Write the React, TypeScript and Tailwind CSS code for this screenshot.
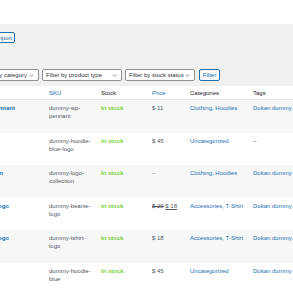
const rows = [
  { name: "WordPress Pennant", nameEnd: "w-[15px]", sku: ["dummy-wp-", "pennant"], price: "$ 11", cats: "Clothing, Hoodies", tags: "Dokan dummy data", stripe: true },
  { name: "", nameEnd: "w-[15px]", sku: ["dummy-hoodie-", "blue-logo"], price: "$ 45", cats: "Uncategorized", tags: "–", stripe: false },
  { name: "Logo Collection", nameEnd: "w-[3px]", sku: ["dummy-logo-", "collection"], price: "–", cats: "Clothing, Hoodies", tags: "Dokan dummy data", stripe: true },
  { name: "Beanie with Logo", nameEnd: "w-[9px]", sku: ["dummy-beanie-", "logo"], price: "sale", cats: "Accessories, T-Shirt", tags: "Dokan dummy data", stripe: false },
  { name: "T-Shirt with Logo", nameEnd: "w-[9px]", sku: ["dummy-tshirt-", "logo"], price: "$ 18", cats: "Accessories, T-Shirt", tags: "Dokan dummy data", stripe: true },
  { name: "", nameEnd: "w-[9px]", sku: ["dummy-hoodie-", "blue"], price: "$ 45", cats: "Uncategorized", tags: "Dokan dummy data", stripe: false },
];

function Chevron() {
  return (
    <svg width="5" height="5" viewBox="0 0 10 10" className="shrink-0">
      <path d="M2 3.5 L5 6.5 L8 3.5" fill="none" stroke="#50575e" strokeWidth="1.4" />
    </svg>
  );
}

function Select({ label, w }: { label: string; w: string }) {
  return (
    <div className={`${w} h-[12px] shrink-0 flex items-center justify-between bg-white border border-[#8c8f94] rounded-[2px] pl-[3px] pr-[4px] text-[#2c3338]`}>
      <span className="whitespace-nowrap">{label}</span>
      <Chevron />
    </div>
  );
}

export default function App() {
  return (
    <div className="w-[293px] h-[293px] overflow-hidden bg-white text-[6px] leading-[8px] text-[#50575e]" style={{ fontFamily: '"Liberation Sans", Arial, sans-serif' }}>
      <div className="h-[24px] bg-white" />
      <div className="h-[62px] bg-[#f0f0f1] flex flex-col">
        <div className="mt-[8px] flex">
          <div className="-ml-[8px] h-[11px] px-[2px] flex items-center border border-[#2271b1] rounded-[2px] bg-[#f6f7f7] text-[#2271b1]">
            Import
          </div>
        </div>
        <div className="mt-[26px] flex items-center -ml-[23px]">
          <Select label="Filter by category" w="w-[62px]" />
          <div className="w-[3px]" />
          <Select label="Filter by product type" w="w-[80px]" />
          <div className="w-[3px]" />
          <Select label="Filter by stock status" w="w-[70px]" />
          <div className="w-[4px]" />
          <div className="h-[12px] w-[21px] shrink-0 flex items-center justify-center border border-[#2271b1] rounded-[2px] bg-[#f6f7f7] text-[#2271b1]">
            Filter
          </div>
        </div>
      </div>
      <div className="h-[14px] flex items-center border-b border-[#e5e5e5] bg-white text-[#1d2327]">
        <div className="w-[49px] shrink-0" />
        <div className="w-[52px] shrink-0 text-[#2271b1]">SKU</div>
        <div className="w-[51px] shrink-0">Stock</div>
        <div className="w-[38px] shrink-0 text-[#2271b1]">Price</div>
        <div className="w-[63px] shrink-0">Categories</div>
        <div className="whitespace-nowrap">Tags</div>
      </div>
      {rows.map((r, i) => (
        <div key={i} className={`h-[32.5px] flex pt-[4px] ${r.stripe ? "bg-[#f6f7f7]" : "bg-white"}`}>
          <div className="w-[49px] shrink-0">
            <div className={`${r.nameEnd} flex justify-end`}>
              <span className="whitespace-nowrap font-bold text-[#2271b1]">{r.name}</span>
            </div>
          </div>
          <div className="w-[52px] shrink-0">
            <div>{r.sku[0]}</div>
            <div>{r.sku[1]}</div>
          </div>
          <div className="w-[51px] shrink-0 font-bold text-[#7ad03a]">In stock</div>
          <div className="w-[38px] shrink-0 whitespace-nowrap">
            {r.price === "sale" ? (
              <span>
                <del>$ 20</del> <ins className="underline">$ 18</ins>
              </span>
            ) : (
              r.price
            )}
          </div>
          <div className="w-[63px] shrink-0 whitespace-nowrap text-[#2271b1]">{r.cats}</div>
          <div className={`whitespace-nowrap ${r.tags === "–" ? "text-[#50575e]" : "text-[#2271b1]"}`}>{r.tags}</div>
        </div>
      ))}
    </div>
  );
}
